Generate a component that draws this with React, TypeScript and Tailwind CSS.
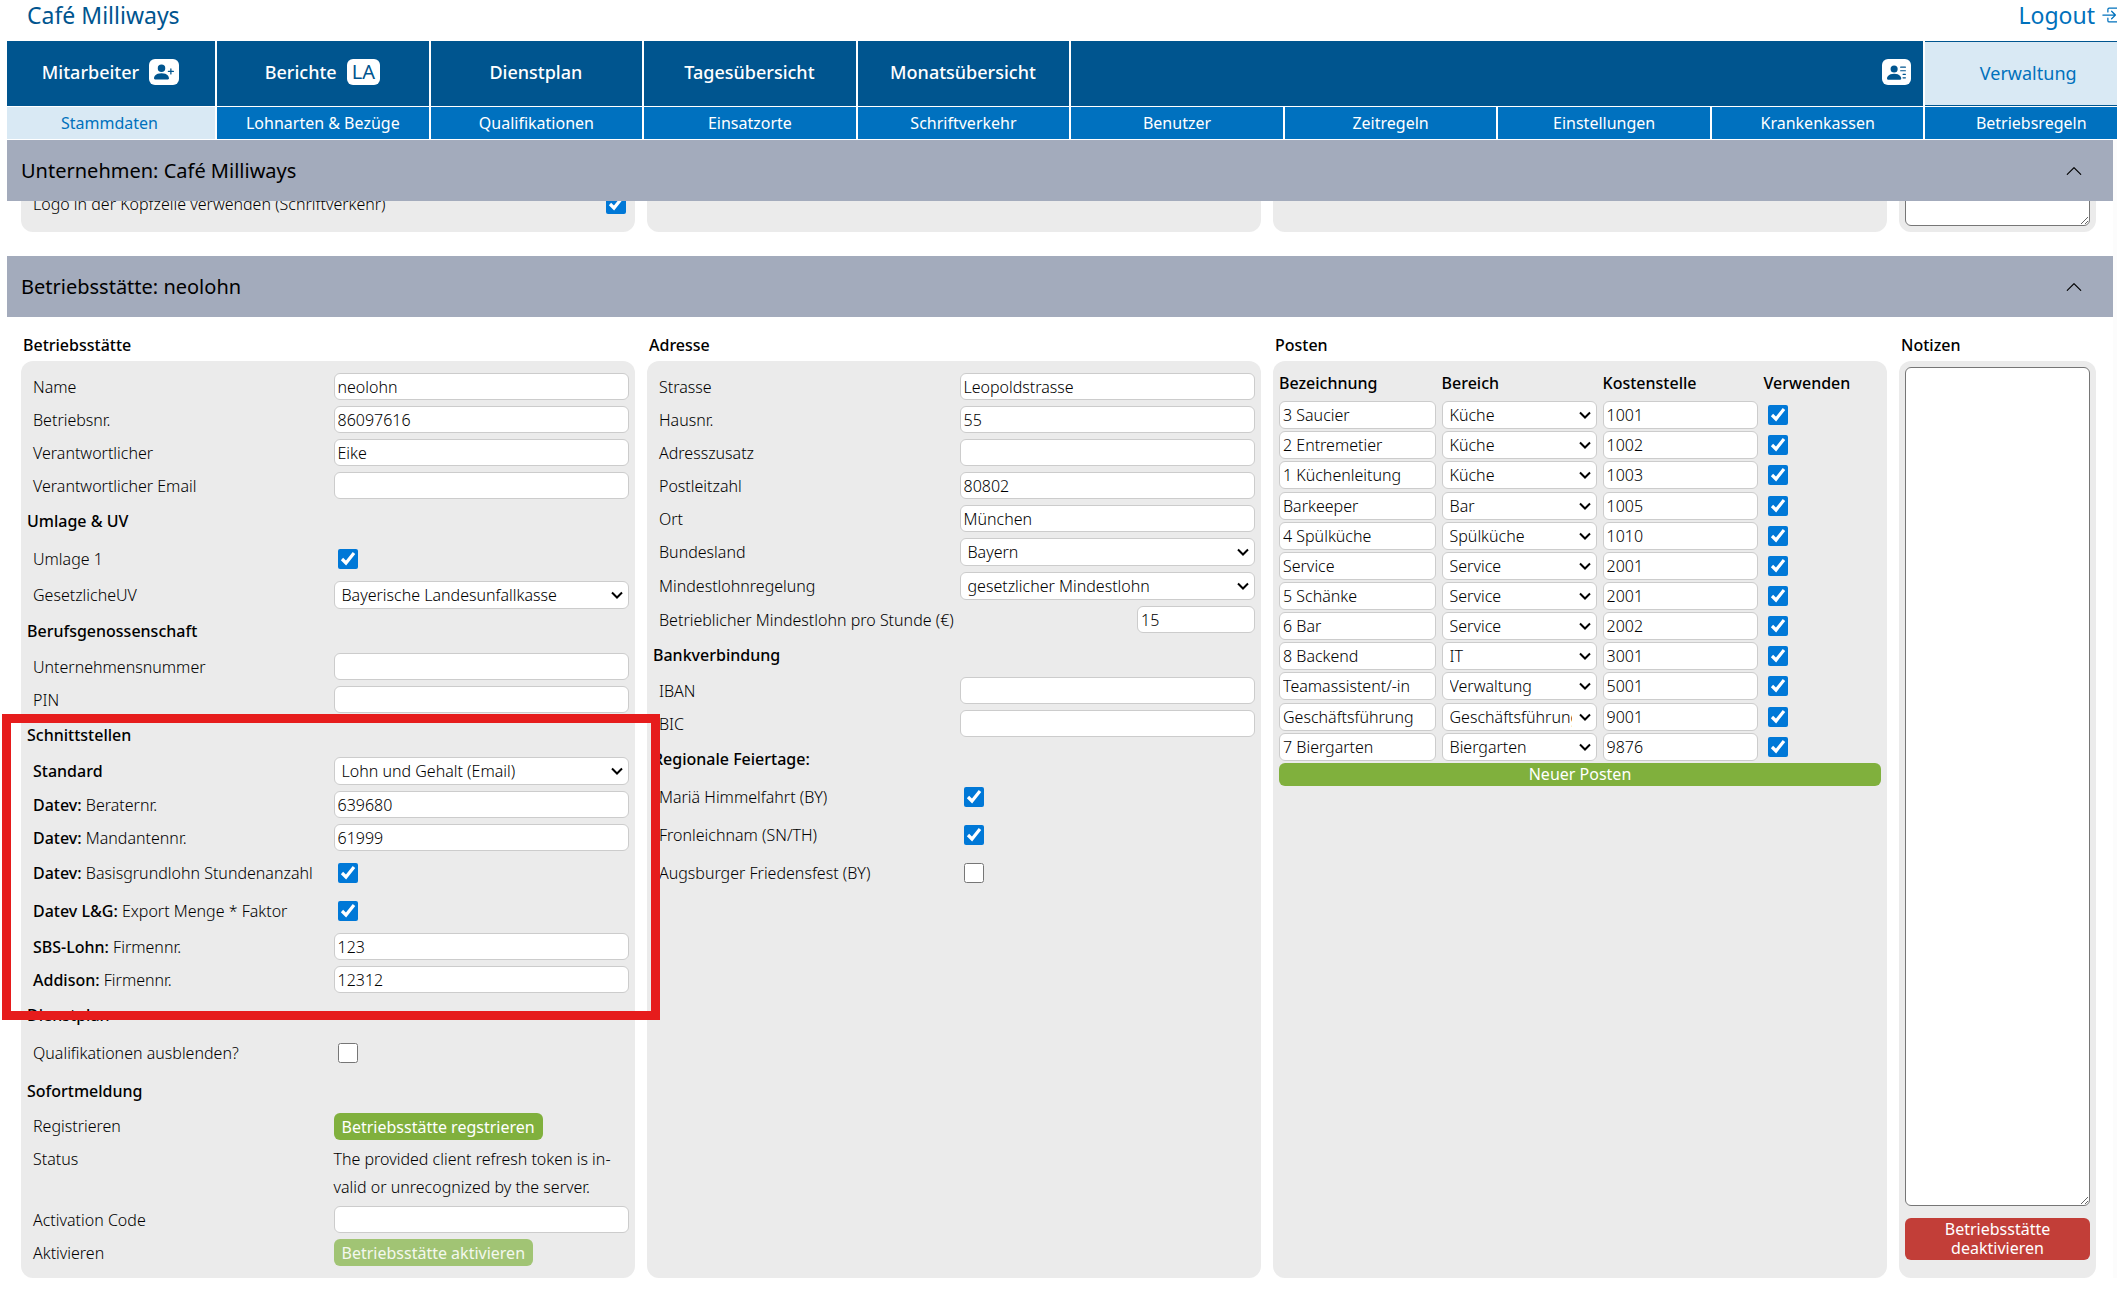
import type { ReactNode } from 'react';
import {
  BsBoxArrowInRight,
  BsChevronUp,
  BsPersonLinesFill,
  BsPersonPlusFill,
} from 'react-icons/bs';

const posten = [
  ['3 Saucier', 'Küche', '1001'],
  ['2 Entremetier', 'Küche', '1002'],
  ['1 Küchenleitung', 'Küche', '1003'],
  ['Barkeeper', 'Bar', '1005'],
  ['4 Spülküche', 'Spülküche', '1010'],
  ['Service', 'Service', '2001'],
  ['5 Schänke', 'Service', '2001'],
  ['6 Bar', 'Service', '2002'],
  ['8 Backend', 'IT', '3001'],
  ['Teamassistent/-in', 'Verwaltung', '5001'],
  ['Geschäftsführung', 'Geschäftsführung', '9001'],
  ['7 Biergarten', 'Biergarten', '9876'],
];

const subNav = [
  'Stammdaten',
  'Lohnarten & Bezüge',
  'Qualifikationen',
  'Einsatzorte',
  'Schriftverkehr',
  'Benutzer',
  'Zeitregeln',
  'Einstellungen',
  'Krankenkassen',
  'Betriebsregeln',
];

const inputClass =
  'h-[27px] w-full min-w-0 rounded-md border border-[#cccccc] bg-white px-[3px] text-black outline-none';
const tallInputClass =
  'block h-7 w-full min-w-0 rounded-md border border-[#cccccc] bg-white px-[3px] text-black outline-none';
const checkClass = 'size-5 shrink-0 accent-[#0078d7]';
const rowClass = 'grid grid-cols-[306fr_295fr] items-center';
const panelClass = 'rounded-xl bg-[#ebebeb] px-1.5';

function Badge({ children }: { children: ReactNode }) {
  return (
    <span className="flex h-[26px] items-center justify-center rounded-md bg-white px-[5px] font-normal text-[#00558f]">
      {children}
    </span>
  );
}

function MainTab({ children }: { children: ReactNode }) {
  return (
    <a
      href="#"
      className="flex items-center justify-center gap-2.5 bg-[#00558f] pr-px pb-[3px] text-[18px] font-medium text-white"
    >
      {children}
    </a>
  );
}

function Label({ id, strong, text }: { id: string; strong?: string; text?: string }) {
  return (
    <label htmlFor={id} className="pl-1.5 whitespace-nowrap">
      {strong && <b className="font-medium">{strong}</b>}
      {strong && text ? ' ' : ''}
      {text}
    </label>
  );
}

function Select({ id, label, value }: { id?: string; label?: string; value: string }) {
  return (
    <div className="relative">
      <select
        id={id}
        aria-label={label}
        defaultValue={value}
        className="block h-7 w-full min-w-0 appearance-none rounded-md border border-[#cccccc] bg-white pr-6 pl-[7px] leading-[26px] text-black outline-none"
      >
        <option>{value}</option>
      </select>
      <svg
        viewBox="0 0 12 8"
        fill="none"
        stroke="currentColor"
        strokeWidth="2"
        className="pointer-events-none absolute top-2.5 right-1.5 h-2 w-3"
      >
        <path d="M1 1.5 6 6.5 11 1.5" />
      </svg>
    </div>
  );
}

type FieldProps = { id: string; label?: string; strong?: string };

function TextRow({ id, label, strong, value = '' }: FieldProps & { value?: string }) {
  return (
    <div className={`${rowClass} h-[33px]`}>
      <Label id={id} strong={strong} text={label} />
      <input id={id} type="text" defaultValue={value} className={inputClass} />
    </div>
  );
}

function SelectRow({ id, label, strong, value }: FieldProps & { value: string }) {
  return (
    <div className={`${rowClass} h-[34px]`}>
      <Label id={id} strong={strong} text={label} />
      <Select id={id} value={value} />
    </div>
  );
}

function CheckRow({ id, label, strong, checked }: FieldProps & { checked?: boolean }) {
  return (
    <div className={`${rowClass} h-[38px]`}>
      <Label id={id} strong={strong} text={label} />
      <input id={id} type="checkbox" defaultChecked={checked} className={`${checkClass} ml-1`} />
    </div>
  );
}

function GroupTitle({ children }: { children: ReactNode }) {
  return <h3 className="flex h-[38px] items-center font-medium">{children}</h3>;
}

function SectionBar({ children }: { children: ReactNode }) {
  return (
    <button
      type="button"
      className="flex h-[61px] w-full items-center justify-between bg-[#a3abbc] pr-[30px] pl-3.5 text-left text-xl font-normal"
    >
      {children}
      <BsChevronUp className="size-[18px]" />
    </button>
  );
}

function Column({ title, children }: { title: string; children: ReactNode }) {
  return (
    <section className="flex flex-col">
      <h2 className="flex h-11 items-center px-0.5 pt-3 pb-0 font-medium">{title}</h2>
      {children}
    </section>
  );
}

export default function App() {
  return (
    <div className="min-h-screen overflow-x-hidden bg-white pb-6 font-['Noto_Sans','Open_Sans',sans-serif] text-base leading-7 font-light text-black">
      <header>
        <div className="-mr-1 flex h-[41px] items-start justify-between pl-[27px] text-[23px] leading-[30px] font-normal">
          <span className="text-[#00558f]">Café Milliways</span>
          <a href="#" className="flex items-center gap-1.5 text-[#0071bc]">
            Logout
            <BsBoxArrowInRight className="size-5" />
          </a>
        </div>
        <nav className="-mr-5 ml-[7px] grid grid-cols-[416fr_repeat(9,423fr)] gap-x-0.5 gap-y-px">
          <MainTab>
            Mitarbeiter
            <Badge>
              <BsPersonPlusFill className="size-5" />
            </Badge>
          </MainTab>
          <MainTab>
            Berichte
            <Badge>
              <span className="text-xl">LA</span>
            </Badge>
          </MainTab>
          <MainTab>Dienstplan</MainTab>
          <MainTab>Tagesübersicht</MainTab>
          <MainTab>Monatsübersicht</MainTab>
          <div className="col-span-4 flex h-[65px] items-center justify-end bg-[#00558f] pr-3 pb-[3px]">
            <a href="#" aria-label="Kontakte">
              <Badge>
                <BsPersonLinesFill className="size-[19px]" />
              </Badge>
            </a>
          </div>
          <a
            href="#"
            className="flex items-center justify-center border-y border-[#00558f] bg-[#d9e9f4] pr-1.5 pb-0.5 text-[18px] font-normal text-[#0071bc]"
          >
            Verwaltung
          </a>
          {subNav.map((item, i) => (
            <a
              key={item}
              href="#"
              className={
                i === 0
                  ? 'flex h-8 items-center justify-center bg-[#d9e9f4] pr-[3px] font-normal text-[#0071bc]'
                  : 'flex h-8 items-center justify-center bg-[#0071bf] font-normal text-white'
              }
            >
              {item}
            </a>
          ))}
        </nav>
      </header>

      <main className="mt-px ml-[7px] border-r-4 border-[#fcfcfc]">
        <SectionBar>Unternehmen: Café Milliways</SectionBar>
        <div className="flex h-[31px] flex-col justify-end overflow-hidden pr-[17px] pl-3.5">
          <div className="grid h-[60px] shrink-0 grid-cols-[614fr_614fr_614fr_197fr] grid-rows-1 gap-3">
            <div className={`${panelClass} flex items-center justify-between pt-[3px]`}>
              <Label id="logo" text="Logo in der Kopfzeile verwenden (Schriftverkehr)" />
              <input id="logo" type="checkbox" defaultChecked className={`${checkClass} mr-[3px]`} />
            </div>
            <div className={panelClass} />
            <div className={panelClass} />
            <div className={`${panelClass} flex pb-1.5`}>
              <textarea
                aria-label="Notizen Unternehmen"
                rows={1}
                className="w-full rounded-md border border-[#767676] bg-white"
              />
            </div>
          </div>
        </div>

        <div className="mt-6">
          <SectionBar>Betriebsstätte: neolohn</SectionBar>
        </div>
        <div className="grid grid-cols-[614fr_614fr_614fr_197fr] gap-3 pr-[17px] pl-3.5">
          <Column title="Betriebsstätte">
            <div className={`${panelClass} flex-1 py-[9px]`}>
              <TextRow id="name" label="Name" value="neolohn" />
              <TextRow id="betriebsnr" label="Betriebsnr." value="86097616" />
              <TextRow id="verantwortlicher" label="Verantwortlicher" value="Eike" />
              <TextRow id="email" label="Verantwortlicher Email" />
              <GroupTitle>Umlage &amp; UV</GroupTitle>
              <CheckRow id="umlage1" label="Umlage 1" checked />
              <SelectRow id="uv" label="GesetzlicheUV" value="Bayerische Landesunfallkasse" />
              <GroupTitle>Berufsgenossenschaft</GroupTitle>
              <TextRow id="unternehmensnr" label="Unternehmensnummer" />
              <TextRow id="pin" label="PIN" />

              <div className="relative">
                <div className="pointer-events-none absolute -top-0.5 -right-[31px] -bottom-6 -left-[25px] z-10 border-[9px] border-[#e61c1c]" />
                <GroupTitle>Schnittstellen</GroupTitle>
                <SelectRow id="standard" strong="Standard" value="Lohn und Gehalt (Email)" />
                <TextRow id="berater" strong="Datev:" label="Beraternr." value="639680" />
                <TextRow id="mandant" strong="Datev:" label="Mandantennr." value="61999" />
                <CheckRow id="basis" strong="Datev:" label="Basisgrundlohn Stundenanzahl" checked />
                <CheckRow id="export" strong="Datev L&G:" label="Export Menge * Faktor" checked />
                <TextRow id="sbs" strong="SBS-Lohn:" label="Firmennr." value="123" />
                <TextRow id="addison" strong="Addison:" label="Firmennr." value="12312" />
              </div>

              <GroupTitle>Dienstplan</GroupTitle>
              <CheckRow id="quali" label="Qualifikationen ausblenden?" />
              <GroupTitle>Sofortmeldung</GroupTitle>
              <div className={`${rowClass} h-8`}>
                <span className="pl-1.5">Registrieren</span>
                <button
                  type="button"
                  className="h-[27px] justify-self-start rounded-md bg-[#80b03d] px-2 font-normal text-white"
                >
                  Betriebsstätte regstrieren
                </button>
              </div>
              <div className="grid grid-cols-[306fr_295fr] pt-[3px] pb-0.5">
                <span className="pl-1.5">Status</span>
                <span>The provided client refresh token is in&shy;valid or unrecognized by the server.</span>
              </div>
              <TextRow id="activation" label="Activation Code" />
              <div className={`${rowClass} h-[33px]`}>
                <span className="pl-1.5">Aktivieren</span>
                <button
                  type="button"
                  disabled
                  className="h-[27px] justify-self-start rounded-md bg-[#a1c474] px-2 font-normal text-[#f4f8ee]"
                >
                  Betriebsstätte aktivieren
                </button>
              </div>
            </div>
          </Column>

          <Column title="Adresse">
            <div className={`${panelClass} flex-1 py-[9px]`}>
              <TextRow id="strasse" label="Strasse" value="Leopoldstrasse" />
              <TextRow id="hausnr" label="Hausnr." value="55" />
              <TextRow id="zusatz" label="Adresszusatz" />
              <TextRow id="plz" label="Postleitzahl" value="80802" />
              <TextRow id="ort" label="Ort" value="München" />
              <SelectRow id="bundesland" label="Bundesland" value="Bayern" />
              <SelectRow id="mindestlohn" label="Mindestlohnregelung" value="gesetzlicher Mindestlohn" />
              <div className="flex h-[33px] items-center justify-between">
                <Label id="stundenlohn" text="Betrieblicher Mindestlohn pro Stunde (€)" />
                <div className="w-[118px]">
                  <input id="stundenlohn" type="text" defaultValue="15" className={inputClass} />
                </div>
              </div>
              <GroupTitle>Bankverbindung</GroupTitle>
              <TextRow id="iban" label="IBAN" />
              <TextRow id="bic" label="BIC" />
              <GroupTitle>Regionale Feiertage:</GroupTitle>
              <CheckRow id="maria" label="Mariä Himmelfahrt (BY)" checked />
              <CheckRow id="fronleichnam" label="Fronleichnam (SN/TH)" checked />
              <CheckRow id="augsburg" label="Augsburger Friedensfest (BY)" />
            </div>
          </Column>

          <Column title="Posten">
            <div className={`${panelClass} flex-1 pt-[5px]`}>
              <table className="h-[396px] w-full table-fixed border-collapse">
                <colgroup>
                  <col className="w-[27%]" />
                  <col className="w-[26.75%]" />
                  <col className="w-[26.75%]" />
                  <col />
                </colgroup>
                <thead>
                  <tr className="h-[34px] text-left">
                    <th className="p-0 font-medium">Bezeichnung</th>
                    <th className="p-0 font-medium">Bereich</th>
                    <th className="p-0 font-medium">Kostenstelle</th>
                    <th className="p-0 font-medium">Verwenden</th>
                  </tr>
                </thead>
                <tbody>
                  {posten.map(([name, bereich, kosten]) => (
                    <tr key={name}>
                      <td className="py-0 pr-1.5 pl-0 align-middle">
                        <input type="text" aria-label="Bezeichnung" defaultValue={name} className={tallInputClass} />
                      </td>
                      <td className="py-0 pr-1.5 pl-0 align-middle">
                        <Select label="Bereich" value={bereich} />
                      </td>
                      <td className="py-0 pr-1.5 pl-0 align-middle">
                        <input type="text" aria-label="Kostenstelle" defaultValue={kosten} className={tallInputClass} />
                      </td>
                      <td className="p-0 align-middle">
                        <input
                          type="checkbox"
                          aria-label="Verwenden"
                          defaultChecked
                          className={`${checkClass} ml-1 block`}
                        />
                      </td>
                    </tr>
                  ))}
                </tbody>
              </table>
              <button
                type="button"
                className="mt-px block h-[23px] w-full rounded-md bg-[#80b03d] leading-[23px] font-normal text-white"
              >
                Neuer Posten
              </button>
            </div>
          </Column>

          <Column title="Notizen">
            <div className={`${panelClass} flex flex-1 flex-col gap-3 pt-1.5 pb-[18px]`}>
              <textarea aria-label="Notizen" className="w-full flex-1 rounded-md border border-[#767676] bg-white" />
              <button
                type="button"
                className="h-[42px] w-full rounded-md bg-[#c23e38] px-6 leading-[19px] font-normal text-white"
              >
                Betriebsstätte deaktivieren
              </button>
            </div>
          </Column>
        </div>
      </main>
    </div>
  );
}
